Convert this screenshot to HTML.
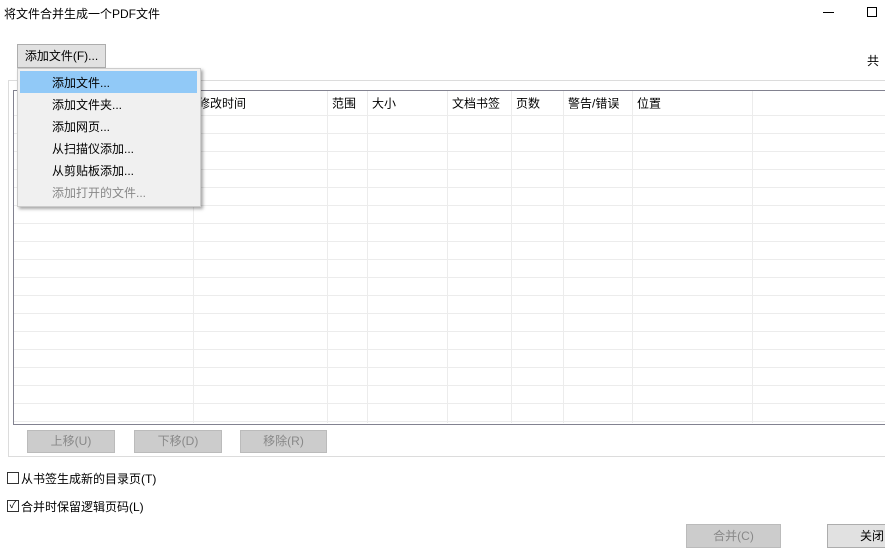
<!DOCTYPE html>
<html><head><meta charset="utf-8"><style>
*{margin:0;padding:0;box-sizing:border-box}
body{width:885px;height:557px;background:#fff;position:relative;overflow:hidden;font-family:"Liberation Sans","Noto Sans CJK SC",sans-serif;font-size:12px;color:#000}
.a{position:absolute;white-space:nowrap}
.btn{position:absolute;background:#ccc;border:1px solid #bbb;color:#888;text-align:center;line-height:20px}
.hl{position:absolute;left:14px;width:871px;height:1px;background:#ececec}
.vl{position:absolute;top:91px;width:1px;height:332px;background:#ececec}
.hd{position:absolute;top:103px;transform:translateY(-50%)}
.mi{position:absolute;left:52px}
</style></head><body>
<div class="a" style="left:4px;top:5px">将文件合并生成一个PDF文件</div>
<div class="a" style="left:823px;top:12px;width:11px;height:1px;background:#000"></div>
<div class="a" style="left:867px;top:7px;width:10px;height:10px;border:1px solid #000"></div>
<div class="a" style="left:867px;top:52px">共</div>
<div class="a" style="left:17px;top:44px;width:89px;height:24px;background:#e1e1e1;border:1px solid #adadad;line-height:22px;text-align:center">添加文件(F)...</div>
<!-- group box -->
<div class="a" style="left:8px;top:80px;width:880px;height:377px;border:1px solid #dcdcdc"></div>
<div class="a" style="left:13px;top:90px;width:875px;height:335px;border:1px solid #828290;border-right:none;background:#fff"></div>
<div class="hl" style="top:115px"></div>
<div class="hl" style="top:133px"></div><div class="hl" style="top:151px"></div><div class="hl" style="top:169px"></div><div class="hl" style="top:187px"></div><div class="hl" style="top:205px"></div><div class="hl" style="top:223px"></div><div class="hl" style="top:241px"></div><div class="hl" style="top:259px"></div><div class="hl" style="top:277px"></div><div class="hl" style="top:295px"></div><div class="hl" style="top:313px"></div><div class="hl" style="top:331px"></div><div class="hl" style="top:349px"></div><div class="hl" style="top:367px"></div><div class="hl" style="top:385px"></div><div class="hl" style="top:403px"></div><div class="hl" style="top:421px"></div>
<div class="vl" style="left:193px"></div><div class="vl" style="left:327px"></div><div class="vl" style="left:367px"></div><div class="vl" style="left:447px"></div><div class="vl" style="left:511px"></div><div class="vl" style="left:563px"></div><div class="vl" style="left:632px"></div><div class="vl" style="left:752px"></div>
<div class="hd" style="left:198px">修改时间</div>
<div class="hd" style="left:332px">范围</div>
<div class="hd" style="left:372px">大小</div>
<div class="hd" style="left:452px">文档书签</div>
<div class="hd" style="left:516px">页数</div>
<div class="hd" style="left:568px">警告/错误</div>
<div class="hd" style="left:637px">位置</div>
<div class="btn" style="left:27px;top:430px;width:88px;height:23px">上移(U)</div>
<div class="btn" style="left:134px;top:430px;width:88px;height:23px">下移(D)</div>
<div class="btn" style="left:240px;top:430px;width:87px;height:23px">移除(R)</div>
<div class="a" style="left:7px;top:472px;width:12px;height:12px;border:1px solid #333"></div>
<div class="a" style="left:21px;top:470px">从书签生成新的目录页(T)</div>
<div class="a" style="left:7px;top:500px;width:12px;height:12px;border:1px solid #333;font-size:10px;line-height:10px;text-align:center">✓</div>
<div class="a" style="left:21px;top:498px">合并时保留逻辑页码(L)</div>
<div class="btn" style="left:686px;top:524px;width:95px;height:24px;line-height:22px">合并(C)</div>
<div class="btn" style="left:827px;top:524px;width:70px;height:24px;line-height:22px;background:#e1e1e1;border-color:#adadad;color:#000;text-align:left;padding-left:32px">关闭</div>
<!-- menu -->
<div class="a" style="left:17px;top:68px;width:184px;height:139px;background:#f0f0f0;border:1px solid #ccc;box-shadow:2px 2px 3px rgba(0,0,0,.35)"></div>
<div class="a" style="left:20px;top:71px;width:177px;height:22px;background:#91c9f7"></div>
<div class="mi" style="top:74px">添加文件...</div>
<div class="mi" style="top:96px">添加文件夹...</div>
<div class="mi" style="top:118px">添加网页...</div>
<div class="mi" style="top:140px">从扫描仪添加...</div>
<div class="mi" style="top:162px">从剪贴板添加...</div>
<div class="mi" style="top:184px;color:#888">添加打开的文件...</div>
</body></html>
